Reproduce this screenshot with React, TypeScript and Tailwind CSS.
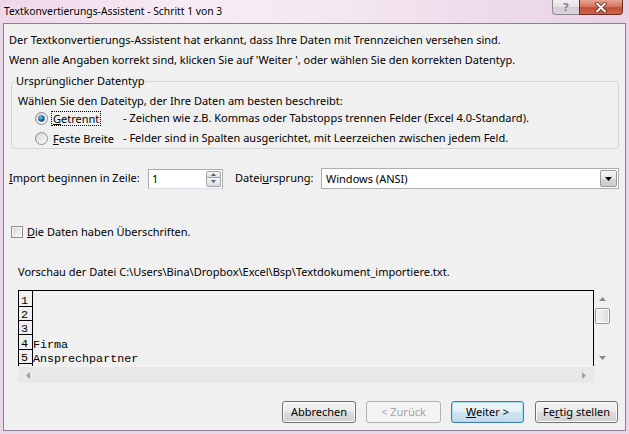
import React from "react";

function Radio({ checked }: { checked?: boolean }) {
  const id = checked ? "rg1" : "rg2";
  return (
    <svg width="13" height="13" viewBox="0 0 13 13" className="shrink-0">
      <defs>
        <linearGradient id={id} x1="0" y1="0" x2="1" y2="1">
          <stop offset="0" stopColor="#cfcfcf" />
          <stop offset="0.5" stopColor="#e9e9e9" />
          <stop offset="1" stopColor="#fbfbfb" />
        </linearGradient>
        <radialGradient id={id + "d"} cx="0.4" cy="0.35" r="0.7">
          <stop offset="0" stopColor="#7fd0f5" />
          <stop offset="0.5" stopColor="#1f74ab" />
          <stop offset="1" stopColor="#0c3a63" />
        </radialGradient>
      </defs>
      <circle cx="6.5" cy="6.5" r="6" fill={`url(#${id})`} stroke="#8c8c8c" strokeWidth="1" />
      {checked && <circle cx="6.5" cy="6.5" r="3.2" fill={`url(#${id}d)`} />}
    </svg>
  );
}

function Btn({
  children,
  w,
  variant,
}: {
  children: React.ReactNode;
  w: string;
  variant?: "default" | "disabled";
}) {
  if (variant === "disabled") {
    return (
      <div className={`${w} h-[22px] rounded-[3px] border border-[#adb2b5] bg-[#f4f4f4] flex items-center justify-center text-[#a3a3a3]`}>
        {children}
      </div>
    );
  }
  if (variant === "default") {
    return (
      <div className={`${w} h-[22px] rounded-[3px] border border-[#3c7fb1] bg-[linear-gradient(180deg,#f0f6fa_0%,#e3eef6_50%,#cfe3f0_51%,#c3dbec_100%)] shadow-[inset_0_0_0_1px_#a8dcf5] flex items-center justify-center`}>
        {children}
      </div>
    );
  }
  return (
    <div className={`${w} h-[22px] rounded-[3px] border border-[#707070] bg-[linear-gradient(180deg,#f2f2f2_0%,#ebebeb_50%,#dddddd_51%,#cfcfcf_100%)] shadow-[inset_0_0_0_1px_#fcfcfc] flex items-center justify-center`}>
      {children}
    </div>
  );
}

function TitleBar() {
  return (
    <div className="h-[23px] flex items-start justify-between bg-[linear-gradient(90deg,#efd6e9_0%,#f7ecf4_30%,#f4e7f1_55%,#ecdae9_80%,#e8d3e5_100%)]">
      <div className="pl-[4px] pt-[3px] text-[10.3px] leading-[17px] text-black [text-shadow:0_0_6px_#ffffff]">
        Textkonvertierungs-Assistent - Schritt 1 von 3
      </div>
      <div className="flex mr-[6px]">
        <div className="w-[27px] h-[15px] rounded-bl-[4px] border border-t-0 border-r-0 border-[#8d8893] bg-[linear-gradient(180deg,#f2eef2_0%,#e6e0e6_50%,#d5ccd4_51%,#dcd4db_100%)] flex items-center justify-center">
          <span className="text-[11px] leading-[13px] font-bold text-[#8a8a92] font-['DejaVu_Sans',sans-serif]">?</span>
        </div>
        <div className="w-[44px] h-[15px] rounded-br-[4px] border border-t-0 border-[#6e2b25] bg-[linear-gradient(180deg,#e8a493_0%,#d67763_45%,#c24f36_55%,#d0654a_100%)] flex items-center justify-center">
          <svg width="14" height="11" viewBox="0 0 14 11">
            <path d="M3 1.5 L11 9.5 M11 1.5 L3 9.5" stroke="#5a1e16" strokeWidth="3.6" strokeLinecap="round" />
            <path d="M3 1.5 L11 9.5 M11 1.5 L3 9.5" stroke="#ffffff" strokeWidth="2" strokeLinecap="round" />
          </svg>
        </div>
      </div>
    </div>
  );
}

function TriUp() {
  return (
    <svg width="7" height="4" viewBox="0 0 7 4">
      <path d="M0 4 L3.5 0 L7 4 Z" fill="#8a8a8a" />
    </svg>
  );
}
function TriDown({ c = "#8a8a8a" }: { c?: string }) {
  return (
    <svg width="7" height="4" viewBox="0 0 7 4">
      <path d="M0 0 L3.5 4 L7 0 Z" fill={c} />
    </svg>
  );
}
function TriLeft() {
  return (
    <svg width="4" height="7" viewBox="0 0 4 7">
      <path d="M4 0 L0 3.5 L4 7 Z" fill="#a0a0a0" />
    </svg>
  );
}
function TriRight() {
  return (
    <svg width="4" height="7" viewBox="0 0 4 7">
      <path d="M0 0 L4 3.5 L0 7 Z" fill="#a0a0a0" />
    </svg>
  );
}

const rows: { n: string; t: string; h: string }[] = [
  { n: "1", t: "", h: "h-[16px]" },
  { n: "2", t: "", h: "h-[14px]" },
  { n: "3", t: "", h: "h-[14px]" },
  { n: "4", t: "Firma", h: "h-[15px]" },
  { n: "5", t: "Ansprechpartner", h: "h-[14px]" },
  { n: "", t: "", h: "h-[4px]" },
];

export default function App() {
  return (
    <div className="w-[629px] h-[434px] bg-[#e9d6e6] flex flex-col overflow-hidden font-['Noto_Sans',sans-serif] text-[11px] text-black">
      <TitleBar />
      <div className="mx-[3px] mb-[3px] flex-1 border border-[#8c8090] bg-[#f0f0f0] flex flex-col pl-[5px]">
        <div className="mt-[6px] h-[20px] leading-[20px] whitespace-nowrap">
          Der Textkonvertierungs-Assistent hat erkannt, dass Ihre Daten mit Trennzeichen versehen sind.
        </div>
        <div className="h-[20px] leading-[20px] whitespace-nowrap">
          Wenn alle Angaben korrekt sind, klicken Sie auf 'Weiter ', oder wählen Sie den korrekten Datentyp.
        </div>

        <fieldset className="mt-[3px] ml-[2px] w-[608px] border border-[#d5d5d5] rounded-[3px] p-0 pl-[3px] m-0 min-w-0">
          <legend className="px-[1px] leading-[16px] h-[16px]">Ursprünglicher Datentyp</legend>
          <div className="mt-[3px] ml-[3px] h-[17px] leading-[17px] whitespace-nowrap">
            Wählen Sie den Dateityp, der Ihre Daten am besten beschreibt:
          </div>
          <div className="h-[19px] flex items-center ml-[20px] whitespace-nowrap">
            <Radio checked />
            <div className="ml-[3px] w-[72px] flex">
              <span className="border border-dotted border-black px-[1px] leading-[13px]">
                <span className="underline">G</span>etrennt
              </span>
            </div>
            <span>- Zeichen wie z.B. Kommas oder Tabstopps trennen Felder (Excel 4.0-Standard).</span>
          </div>
          <div className="h-[20px] flex items-center ml-[20px] whitespace-nowrap">
            <Radio />
            <div className="ml-[3px] w-[72px] flex">
              <span className="border border-transparent px-[1px] leading-[13px]">
                <span className="underline">F</span>este Breite
              </span>
            </div>
            <span>- Felder sind in Spalten ausgerichtet, mit Leerzeichen zwischen jedem Feld.</span>
          </div>
        </fieldset>

        <div className="mt-[19px] h-[21px] flex items-center whitespace-nowrap">
          <div className="w-[139px]">
            <span className="underline">I</span>mport beginnen in Zeile:
          </div>
          <div className="w-[75px] h-[20px] border border-[#abadb3] border-b-[#dbdfe6] bg-white flex">
            <div className="flex-1 pl-[3px] leading-[18px]">1</div>
            <div className="w-[15px] flex flex-col my-[1px] mr-[1px]">
              <div className="h-[8px] border border-[#a6a6a6] rounded-t-[2px] bg-[linear-gradient(180deg,#f6f6f6,#dcdcdc)] flex items-center justify-center">
                <svg width="5" height="3" viewBox="0 0 5 3"><path d="M0 3 L2.5 0 L5 3 Z" fill="#4d6185" /></svg>
              </div>
              <div className="h-[9px] border border-t-0 border-[#a6a6a6] rounded-b-[2px] bg-[linear-gradient(180deg,#f6f6f6,#dcdcdc)] flex items-center justify-center">
                <svg width="5" height="3" viewBox="0 0 5 3"><path d="M0 0 L2.5 3 L5 0 Z" fill="#4d6185" /></svg>
              </div>
            </div>
          </div>
          <div className="ml-[12px] w-[86px]">
            Datei<span className="underline">u</span>rsprung:
          </div>
          <div className="w-[298px] h-[21px] border border-[#abadb3] bg-white flex items-center">
            <div className="flex-1 pl-[4px] leading-[19px]">Windows (ANSI)</div>
            <div className="w-[17px] h-[17px] mr-[1px] border border-[#9a9a9a] rounded-[2px] bg-[linear-gradient(180deg,#f4f4f4_0%,#e6e6e6_50%,#d6d6d6_51%,#cdcdcd_100%)] flex items-center justify-center">
              <TriDown c="#000000" />
            </div>
          </div>
        </div>

        <div className="mt-[35px] h-[16px] flex items-center whitespace-nowrap">
          <div className="ml-[2px] w-[12px] h-[12px] border border-[#8e8f8f] bg-[linear-gradient(135deg,#d4d4d4_0%,#ececec_60%,#f8f8f8_100%)] shadow-[inset_0_0_0_1px_#f4f4f4]" />
          <span className="ml-[4px]">
            <span className="underline">D</span>ie Daten haben Überschriften.
          </span>
        </div>

        <div className="mt-[24px] ml-[9px] h-[16px] leading-[16px] whitespace-nowrap">
          Vorschau der Datei C:\Users\Bina\Dropbox\Excel\Bsp\Textdokument_importiere.txt.
        </div>

        <div className="mt-[10px] ml-[9px] w-[593px] grid grid-cols-[576px_17px] grid-rows-[76px_17px]">
          <div className="border-t border-l border-r border-black overflow-hidden font-['Liberation_Mono',monospace] text-[11.7px]">
            {rows.map((r, i) => (
              <div key={i} className={`${r.h} flex`}>
                <div className={`w-[14px] shrink-0 border-r border-black pl-[2px] leading-[10px] flex items-end ${r.n ? "border-b" : ""}`}>{r.n}</div>
                <div className="leading-[10px] flex items-end whitespace-pre">{r.t}</div>
              </div>
            ))}
          </div>
          <div className="flex flex-col items-center">
            <div className="h-[17px] flex items-center justify-center pt-[1px]">
              <TriUp />
            </div>
            <div className="w-[15px] h-[16px] mt-[1px] rounded-[2px] border border-[#979797] bg-[linear-gradient(90deg,#f3f3f3_0%,#e9e9e9_50%,#d9d9d9_100%)] shadow-[inset_0_0_0_1px_#fafafa]" />
            <div className="flex-1" />
            <div className="h-[17px] flex items-center justify-center">
              <TriDown />
            </div>
          </div>
          <div className="bg-[#e8e8e8] border-t border-[#f4f4f4] flex items-center justify-between px-[8px]">
            <TriLeft />
            <TriRight />
          </div>
          <div />
        </div>

        <div className="mt-[18px] flex justify-end pr-[7px] whitespace-nowrap">
          <Btn w="w-[74px]">Abbrechen</Btn>
          <div className="w-[10px]" />
          <Btn w="w-[75px]" variant="disabled">&lt; Zurück</Btn>
          <div className="w-[10px]" />
          <Btn w="w-[73px]" variant="default">
            <span>
              <span className="underline">W</span>eiter &gt;
            </span>
          </Btn>
          <div className="w-[11px]" />
          <Btn w="w-[83px]">
            <span>
              Fe<span className="underline">r</span>tig stellen
            </span>
          </Btn>
        </div>
      </div>
    </div>
  );
}
